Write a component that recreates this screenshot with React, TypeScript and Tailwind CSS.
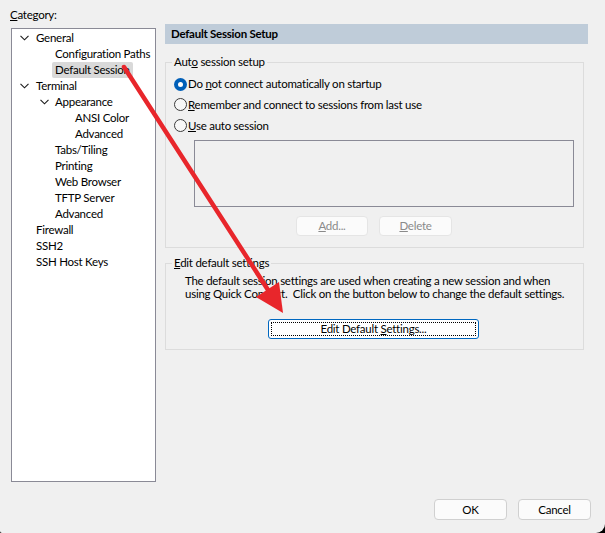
import React from 'react';

const font = { fontFamily: '"Segoe UI", Lato, "Noto Sans", sans-serif' };

type Node = { label: string; level: number; open?: boolean; selected?: boolean };

const tree: Node[] = [
  { label: 'General', level: 0, open: true },
  { label: 'Configuration Paths', level: 1 },
  { label: 'Default Session', level: 1, selected: true },
  { label: 'Terminal', level: 0, open: true },
  { label: 'Appearance', level: 1, open: true },
  { label: 'ANSI Color', level: 2 },
  { label: 'Advanced', level: 2 },
  { label: 'Tabs/Tiling', level: 1 },
  { label: 'Printing', level: 1 },
  { label: 'Web Browser', level: 1 },
  { label: 'TFTP Server', level: 1 },
  { label: 'Advanced', level: 1 },
  { label: 'Firewall', level: 0 },
  { label: 'SSH2', level: 0 },
  { label: 'SSH Host Keys', level: 0 },
];

const indent = ['pl-[24px]', 'pl-[43px]', 'pl-[63px]'];
const chevronPos = ['left-[8px]', 'left-[28px]', 'left-[48px]'];

const Chevron = () => (
  <svg width="9" height="6" viewBox="0 0 9 6" className="block">
    <path d="M0.5 0.8 L4.5 4.8 L8.5 0.8" fill="none" stroke="#1a1a1a" strokeWidth="1.1" />
  </svg>
);

const Radio = ({ checked }: { checked?: boolean }) =>
  checked ? (
    <span className="w-[13px] h-[13px] rounded-full bg-[#005fb8] flex items-center justify-center shrink-0">
      <span className="w-[5px] h-[5px] rounded-full bg-white" />
    </span>
  ) : (
    <span className="w-[13px] h-[13px] rounded-full border border-[#3b3b3b] bg-[#f7f7f7] shrink-0" />
  );

const Btn = ({ children, disabled, className = '' }: { children: React.ReactNode; disabled?: boolean; className?: string }) => (
  <div
    className={`h-[20px] flex items-center justify-center rounded-[4px] border bg-[#fbfbfb] ${
      disabled ? 'border-[#e5e5e5] text-[#8a8a8a]' : 'border-[#d0d0d0] text-black'
    } ${className}`}
  >
    {children}
  </div>
);

export default function App() {
  return (
    <div
      className="w-[605px] h-[533px] bg-black relative overflow-hidden text-[11.5px] tracking-[-0.25px] leading-[16px] text-black whitespace-nowrap"
      style={font}
    >
      <div className="w-full h-full bg-[#f0f0f0] rounded-br-[9px] rounded-bl-[2px] flex flex-col">
        <div className="flex flex-1">
          {/* left: category tree */}
          <div className="w-[165px] shrink-0 pl-[10px] pt-[7px]">
            <div>
              <span className="underline">C</span>ategory:
            </div>
            <div className="mt-[5px] ml-[1px] w-[145px] h-[454px] bg-white border border-[#8a8a96] pt-[1px]">
              {tree.map((n, i) => (
                <div key={i} className={`relative h-[16px] flex items-center ${indent[n.level]}`}>
                  {n.open && (
                    <span className={`absolute top-[5px] ${chevronPos[n.level]}`}>
                      <Chevron />
                    </span>
                  )}
                  <span className={n.selected ? 'bg-[#d9d9d9] px-[3px] -ml-[3px] rounded-[2px]' : ''}>{n.label}</span>
                </div>
              ))}
            </div>
          </div>

          {/* right: settings panel */}
          <div className="flex-1 pt-[24px] pr-[17px]">
            <div className="h-[20px] bg-[#bfccd9] pl-[6px] flex items-center font-bold">Default Session Setup</div>

            <fieldset className="mt-[10px] mr-[4px] h-[194px] border border-[#dcdcdc] px-[8px]">
              <legend className="-ml-[2px] px-[2px]">
                Aut<span className="underline">o</span> session setup
              </legend>
              <div className="flex flex-col pt-[4px]">
                <div className="h-[20px] flex items-center gap-[1px]">
                  <Radio checked />
                  <span>
                    Do <span className="underline">n</span>ot connect automatically on startup
                  </span>
                </div>
                <div className="h-[21px] flex items-center gap-[1px]">
                  <Radio />
                  <span>
                    <span className="underline">R</span>emember and connect to sessions from last use
                  </span>
                </div>
                <div className="h-[21px] flex items-center gap-[1px]">
                  <Radio />
                  <span>
                    <span className="underline">U</span>se auto session
                  </span>
                </div>
              </div>
              <div className="mt-[4px] ml-[20px] w-[380px] h-[67px] border border-[#8a8a96]" />
              <div className="mt-[9px] ml-[122px] flex gap-[11px]">
                <Btn disabled className="w-[72px]">
                  <span>
                    <span className="underline">A</span>dd...
                  </span>
                </Btn>
                <Btn disabled className="w-[73px]">
                  <span>
                    <span className="underline">D</span>elete
                  </span>
                </Btn>
              </div>
            </fieldset>

            <fieldset className="mt-[7px] mr-[4px] h-[95px] border border-[#dcdcdc] px-[19px]">
              <legend className="-ml-[13px] px-[2px]">
                <span className="underline">E</span>dit default settings
              </legend>
              <p className="leading-[13px] mt-[3px]">
                The default session settings are used when creating a new session and when
                <br />
                using Quick Connect.&nbsp; Click on the button below to change the default settings.
              </p>
              <div className="mt-[19px] ml-[83px] w-[211px] h-[20px] rounded-[3px] border border-[#0067c0] bg-white p-[2px]">
                <div className="w-full h-full border border-dotted border-black flex items-center justify-center">
                  <span>
                    Edit Default <span className="underline">S</span>ettings...
                  </span>
                </div>
              </div>
            </fieldset>
          </div>
        </div>

        {/* bottom buttons */}
        <div className="flex justify-end gap-[11px] pr-[14px] pb-[13px]">
          <Btn className="w-[73px] h-[21px]">OK</Btn>
          <Btn className="w-[73px] h-[21px]">Cancel</Btn>
        </div>
      </div>

      {/* red annotation arrow */}
      <svg className="absolute inset-0 pointer-events-none" width="605" height="533">
        <line x1="124" y1="67" x2="270" y2="293" stroke="#e8262b" strokeWidth="4.5" strokeLinecap="round" />
        <polygon points="283,313 279,282 256,297" fill="#e8262b" />
      </svg>
    </div>
  );
}
